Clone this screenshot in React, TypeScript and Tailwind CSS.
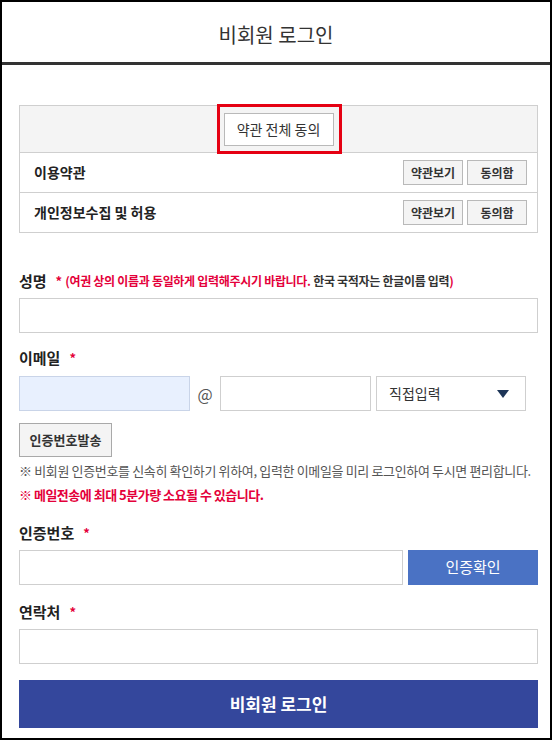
import React from "react";

const FONT = { fontFamily: '"Noto Sans CJK KR", "Noto Sans", sans-serif' };

function Star() {
  return <span className="ml-[9px] text-[13px] font-bold text-[#e4003a]">*</span>;
}

function SmallButton({ children }: { children: React.ReactNode }) {
  return (
    <button className="h-[25px] w-[60px] border border-[#b9b9b9] bg-[#f4f4f4] text-[12px] font-bold text-[#333] leading-none">
      {children}
    </button>
  );
}

function TermsRow({ label }: { label: string }) {
  return (
    <div className="flex h-[40px] items-center justify-between border-t border-[#cfcfcf] pl-[14px] pr-[10px]">
      <span className="text-[14px] font-bold text-[#222]">{label}</span>
      <div className="flex gap-[4px]">
        <SmallButton>약관보기</SmallButton>
        <SmallButton>동의함</SmallButton>
      </div>
    </div>
  );
}

function Label({ children, extra }: { children: React.ReactNode; extra?: React.ReactNode }) {
  return (
    <div className="flex items-center h-[20px]">
      <span className="text-[15px] font-bold text-[#222]">{children}</span>
      <Star />
      {extra}
    </div>
  );
}

function TextInput({ className = "" }: { className?: string }) {
  return <div className={"h-[35px] border border-[#cfcfcf] bg-white " + className} />;
}

export default function App() {
  return (
    <div className="h-[740px] w-[552px] overflow-hidden border-2 border-black bg-white text-[#222]" style={FONT}>
      <header className="flex h-[63px] items-center justify-center border-b-[3px] border-[#333] pt-[6px]">
        <h1 className="text-[20px] font-normal text-[#333]">비회원 로그인</h1>
      </header>

      <div className="pl-[17px] pr-[12px]">
        {/* 약관 동의 */}
        <div className="mt-[40px] border border-[#cfcfcf]">
          <div className="flex h-[46px] items-center justify-center bg-[#f4f4f4]">
            <div className="relative">
              <button className="h-[33px] w-[110px] border border-[#b9b9b9] bg-white text-[14px] text-[#333]">
                약관 전체 동의
              </button>
              <span className="pointer-events-none absolute -left-[7px] -right-[8px] -top-[9px] -bottom-[8px] border-[3px] border-[#e50012]" />
            </div>
          </div>
          <TermsRow label="이용약관" />
          <TermsRow label="개인정보수집 및 허용" />
        </div>

        <div className="mt-[38px]">
          <Label
            extra={
              <span className="ml-[3px] text-[12px] font-bold tracking-[-0.3px] text-[#e4003a]">
                (여권 상의 이름과 동일하게 입력해주시기 바랍니다.{" "}
                <span className="text-[#333]">한국 국적자는 한글이름 입력</span>)
              </span>
            }
          >
            성명
          </Label>
          <TextInput className="mt-[7px]" />
        </div>

        {/* 이메일 */}
        <div className="mt-[15px]">
          <Label>이메일</Label>
          <div className="mt-[8px] flex items-center">
            <div className="h-[35px] w-[171px] border border-[#c9d4e8] bg-[#e8f0fe]" />
            <span className="w-[30px] text-center text-[16px] text-[#555]">@</span>
            <div className="h-[35px] w-[151px] border border-[#cfcfcf] bg-white" />
            <div className="ml-[5px] flex h-[35px] w-[150px] items-center justify-between border border-[#cfcfcf] bg-white pl-[12px] pr-[16px]">
              <span className="text-[14px] text-[#333]">직접입력</span>
              <svg width="12" height="8" viewBox="0 0 12 8">
                <path d="M0 0 L12 0 L6 8 Z" fill="#1d3557" />
              </svg>
            </div>
          </div>
          <button className="mt-[12px] h-[34px] w-[93px] border border-[#a9a9a9] bg-[#f4f4f4] text-[13px] font-bold text-[#333]">
            인증번호발송
          </button>
          <p className="mt-[4px] text-[13px] leading-[20px] tracking-[-0.35px] text-[#555]">
            ※ 비회원 인증번호를 신속히 확인하기 위하여, 입력한 이메일을 미리 로그인하여 두시면 편리합니다.
          </p>
          <p className="mt-[4px] text-[13px] leading-[20px] font-bold tracking-[-0.5px] text-[#e4003a]">
            ※ 메일전송에 최대 5분가량 소요될 수 있습니다.
          </p>
        </div>

        <div className="mt-[18px]">
          <Label>인증번호</Label>
          <div className="mt-[7px] flex gap-[5px]">
            <TextInput className="flex-1" />
            <button className="h-[35px] w-[130px] bg-[#4a72c4] text-[15px] text-white">인증확인</button>
          </div>
        </div>

        <div className="mt-[17px]">
          <Label>연락처</Label>
          <TextInput className="mt-[7px]" />
        </div>

        <button className="mt-[16px] h-[48px] w-full bg-[#34479c] text-[17px] font-bold text-white">
          비회원 로그인
        </button>
      </div>
    </div>
  );
}
